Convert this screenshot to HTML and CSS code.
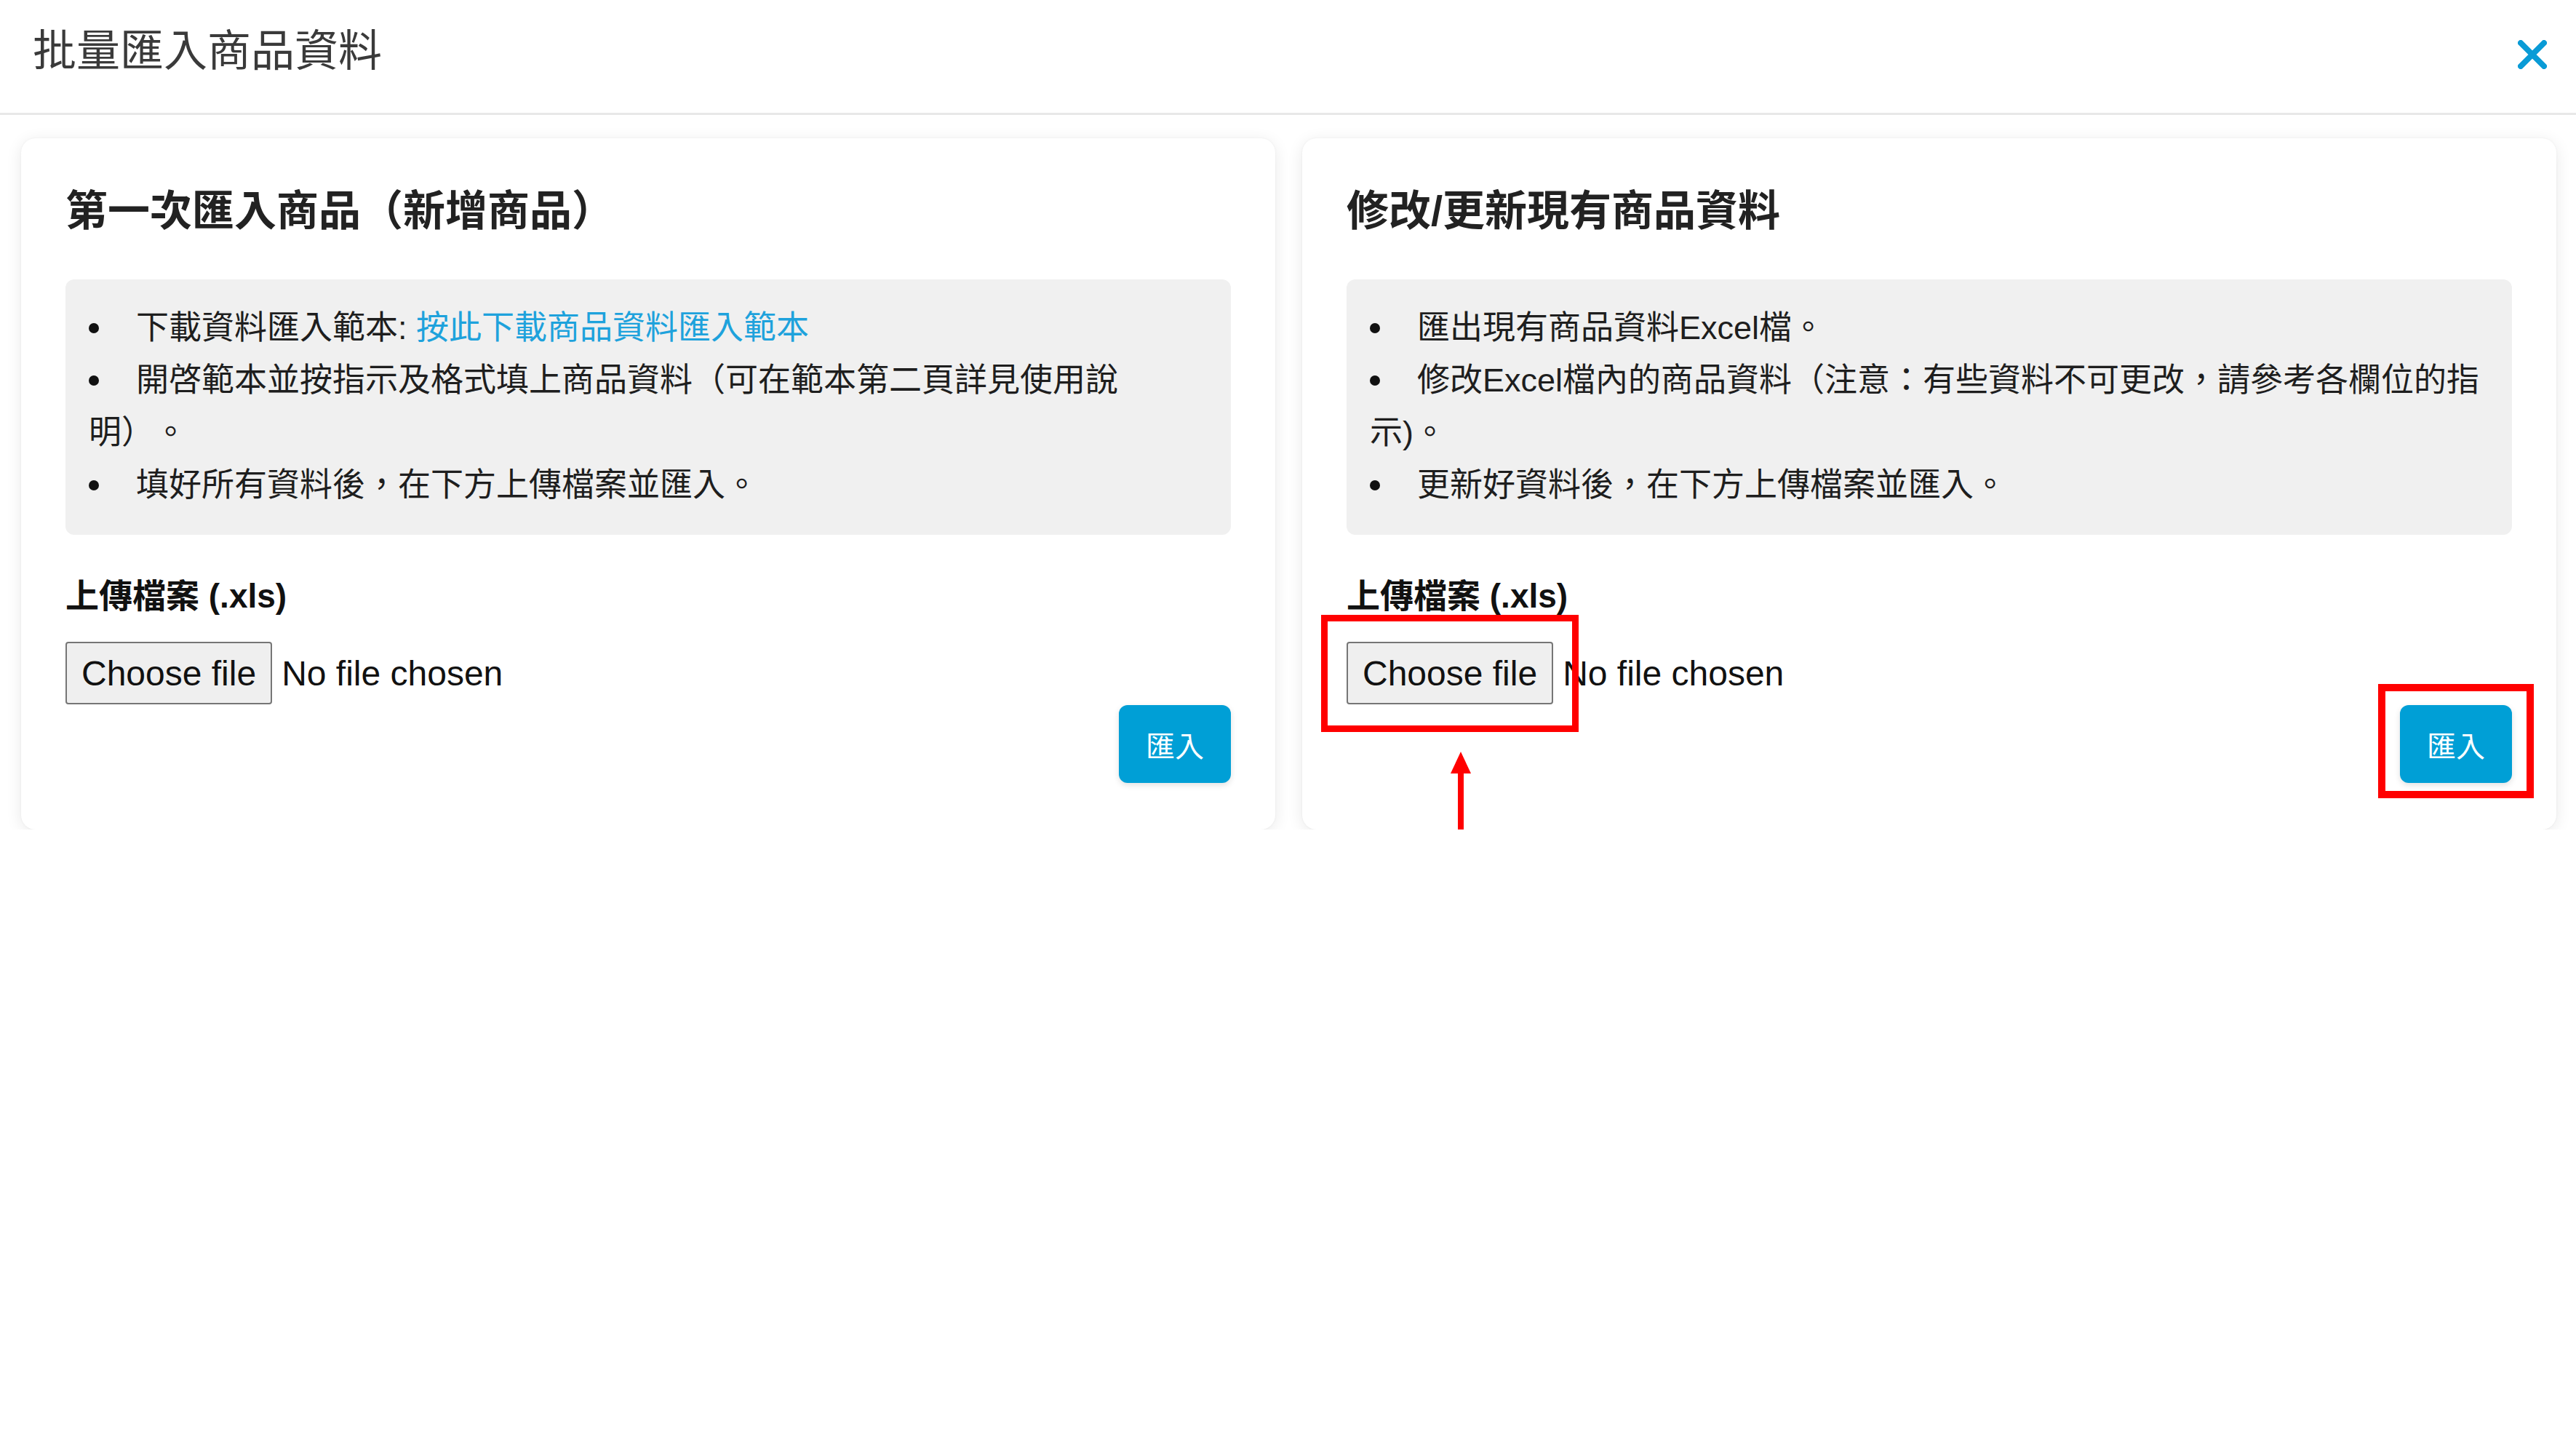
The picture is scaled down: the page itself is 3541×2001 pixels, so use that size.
FILE: index.html
```html
<!DOCTYPE html>
<html>
<head>
  <meta charset="UTF-8">
  <title>批量匯入商品資料</title>
  <link rel="stylesheet" href="styles.css">
</head>
<body>
  <div class="modal">
    <header class="modal-header">
      <h2 class="modal-title">批量匯入商品資料</h2>
      <button class="close-btn" aria-label="close">
        <svg width="40" height="40" viewBox="0 0 40 40">
          <path d="M4 4 L36 36 M36 4 L4 36" stroke="#0a9bd6" stroke-width="8" stroke-linecap="round"/>
        </svg>
      </button>
    </header>

    <div class="modal-body">
      <section class="card">
        <h3 class="card-title">第一次匯入商品（新增商品）</h3>
        <ul class="steps">
          <li>下載資料匯入範本: <a href="#">按此下載商品資料匯入範本</a></li>
          <li>開啓範本並按指示及格式填上商品資料（可在範本第二頁詳見使用說明）。</li>
          <li>填好所有資料後，在下方上傳檔案並匯入。</li>
        </ul>
        <div class="upload-label">上傳檔案 (.xls)</div>
        <div class="file-row">
          <span class="file-btn">Choose file</span>
          <span class="file-name">No file chosen</span>
        </div>
        <div class="actions">
          <button class="import-btn">匯入</button>
        </div>
      </section>

      <section class="card">
        <h3 class="card-title">修改/更新現有商品資料</h3>
        <ul class="steps">
          <li>匯出現有商品資料Excel檔。</li>
          <li>修改Excel檔內的商品資料（注意：有些資料不可更改，請參考各欄位的指示)。</li>
          <li>更新好資料後，在下方上傳檔案並匯入。</li>
        </ul>
        <div class="upload-label">上傳檔案 (.xls)</div>
        <div class="file-row">
          <span class="file-btn marked">Choose file</span>
          <span class="file-name">No file chosen</span>
        </div>
        <div class="actions">
          <button class="import-btn marked">匯入</button>
        </div>
        <!-- red annotation arrow under the file button -->
        <svg class="hint-arrow" width="30" height="112" viewBox="0 0 30 112">
          <polygon points="15,0 29,30 1,30" fill="#ff0000"/>
          <rect x="11" y="28" width="8" height="84" fill="#ff0000"/>
        </svg>
      </section>
    </div>
  </div>
</body>
</html>
```

FILE: styles.css
```css
body {
  margin: 0;
  background: #fff;
  font-family: "Liberation Sans", "Noto Sans CJK TC", sans-serif;
  color: #222;
  text-spacing-trim: space-all;
}

.modal-header {
  height: 158px;
  display: flex;
  align-items: center;
  justify-content: space-between;
  padding: 0 40px 14px 45px;
  box-sizing: border-box;
  border-bottom: 3px solid #e8e8e8;
}

.modal-title {
  margin: 0;
  font-size: 60px;
  font-weight: 400;
  color: #3a3a3a;
  line-height: 1;
}

.close-btn {
  background: none;
  border: none;
  padding: 0;
  margin-top: 8px;
  cursor: pointer;
  line-height: 0;
}

.modal-body {
  display: grid;
  grid-template-columns: 1fr 1fr;
  gap: 37px;
  padding: 32px 27px 0 29px;
}

.card {
  position: relative;
  background: #fff;
  border-radius: 20px;
  box-shadow: 0 4px 22px rgba(0, 0, 0, 0.09), 0 0 3px rgba(0, 0, 0, 0.05);
  padding: 64px 61px 64px;
}

.card-title {
  margin: 0 0 58px;
  font-size: 58px;
  line-height: 72px;
  font-weight: 700;
  color: #222;
  word-spacing: 4px;
}

.steps {
  list-style: none;
  margin: 0;
  padding: 31px 40px 32px 32px;
  background: #f0f0f0;
  border-radius: 12px;
}

.steps li {
  font-size: 45px;
  line-height: 72px;
  color: #1e1e1e;
}

.steps li::before {
  content: "";
  display: inline-block;
  width: 14px;
  height: 14px;
  border-radius: 50%;
  background: #111;
  margin: 0 51px 0 0;
  vertical-align: middle;
  position: relative;
  top: -3px;
}

.steps a {
  color: #1ea2dc;
  text-decoration: none;
}

.upload-label {
  margin-top: 54px;
  font-size: 46px;
  line-height: 60px;
  font-weight: 700;
  color: #111;
}

.file-row {
  margin-top: 33px;
  display: flex;
  align-items: center;
  font-size: 48px;
  color: #111;
}

.file-btn {
  position: relative;
  box-sizing: border-box;
  height: 86px;
  display: flex;
  align-items: center;
  padding: 0 20px;
  background: #efefef;
  border: 2px solid #767676;
  border-radius: 4px;
  margin-right: 13px;
}

.actions {
  display: flex;
  justify-content: flex-end;
  margin-top: 1px;
}

.import-btn {
  position: relative;
  width: 154px;
  height: 107px;
  border: none;
  border-radius: 12px;
  background: #009fd6;
  color: #fff;
  font-family: "Noto Sans CJK TC", sans-serif;
  font-size: 40px;
  box-shadow: 0 3px 8px rgba(0, 0, 0, 0.12);
  cursor: pointer;
}

/* red annotation boxes */
.file-btn.marked::after,
.import-btn.marked::after {
  content: "";
  position: absolute;
  border: 9px solid #ff0000;
  pointer-events: none;
}

.file-btn.marked::after {
  left: -37px;
  right: -37px;
  top: -39px;
  bottom: -40px;
}

.import-btn.marked::after {
  left: -30px;
  right: -30px;
  top: -29px;
  bottom: -21px;
  border-width: 10px;
}

.hint-arrow {
  position: absolute;
  left: 203px;
  top: 843px;
}
```
